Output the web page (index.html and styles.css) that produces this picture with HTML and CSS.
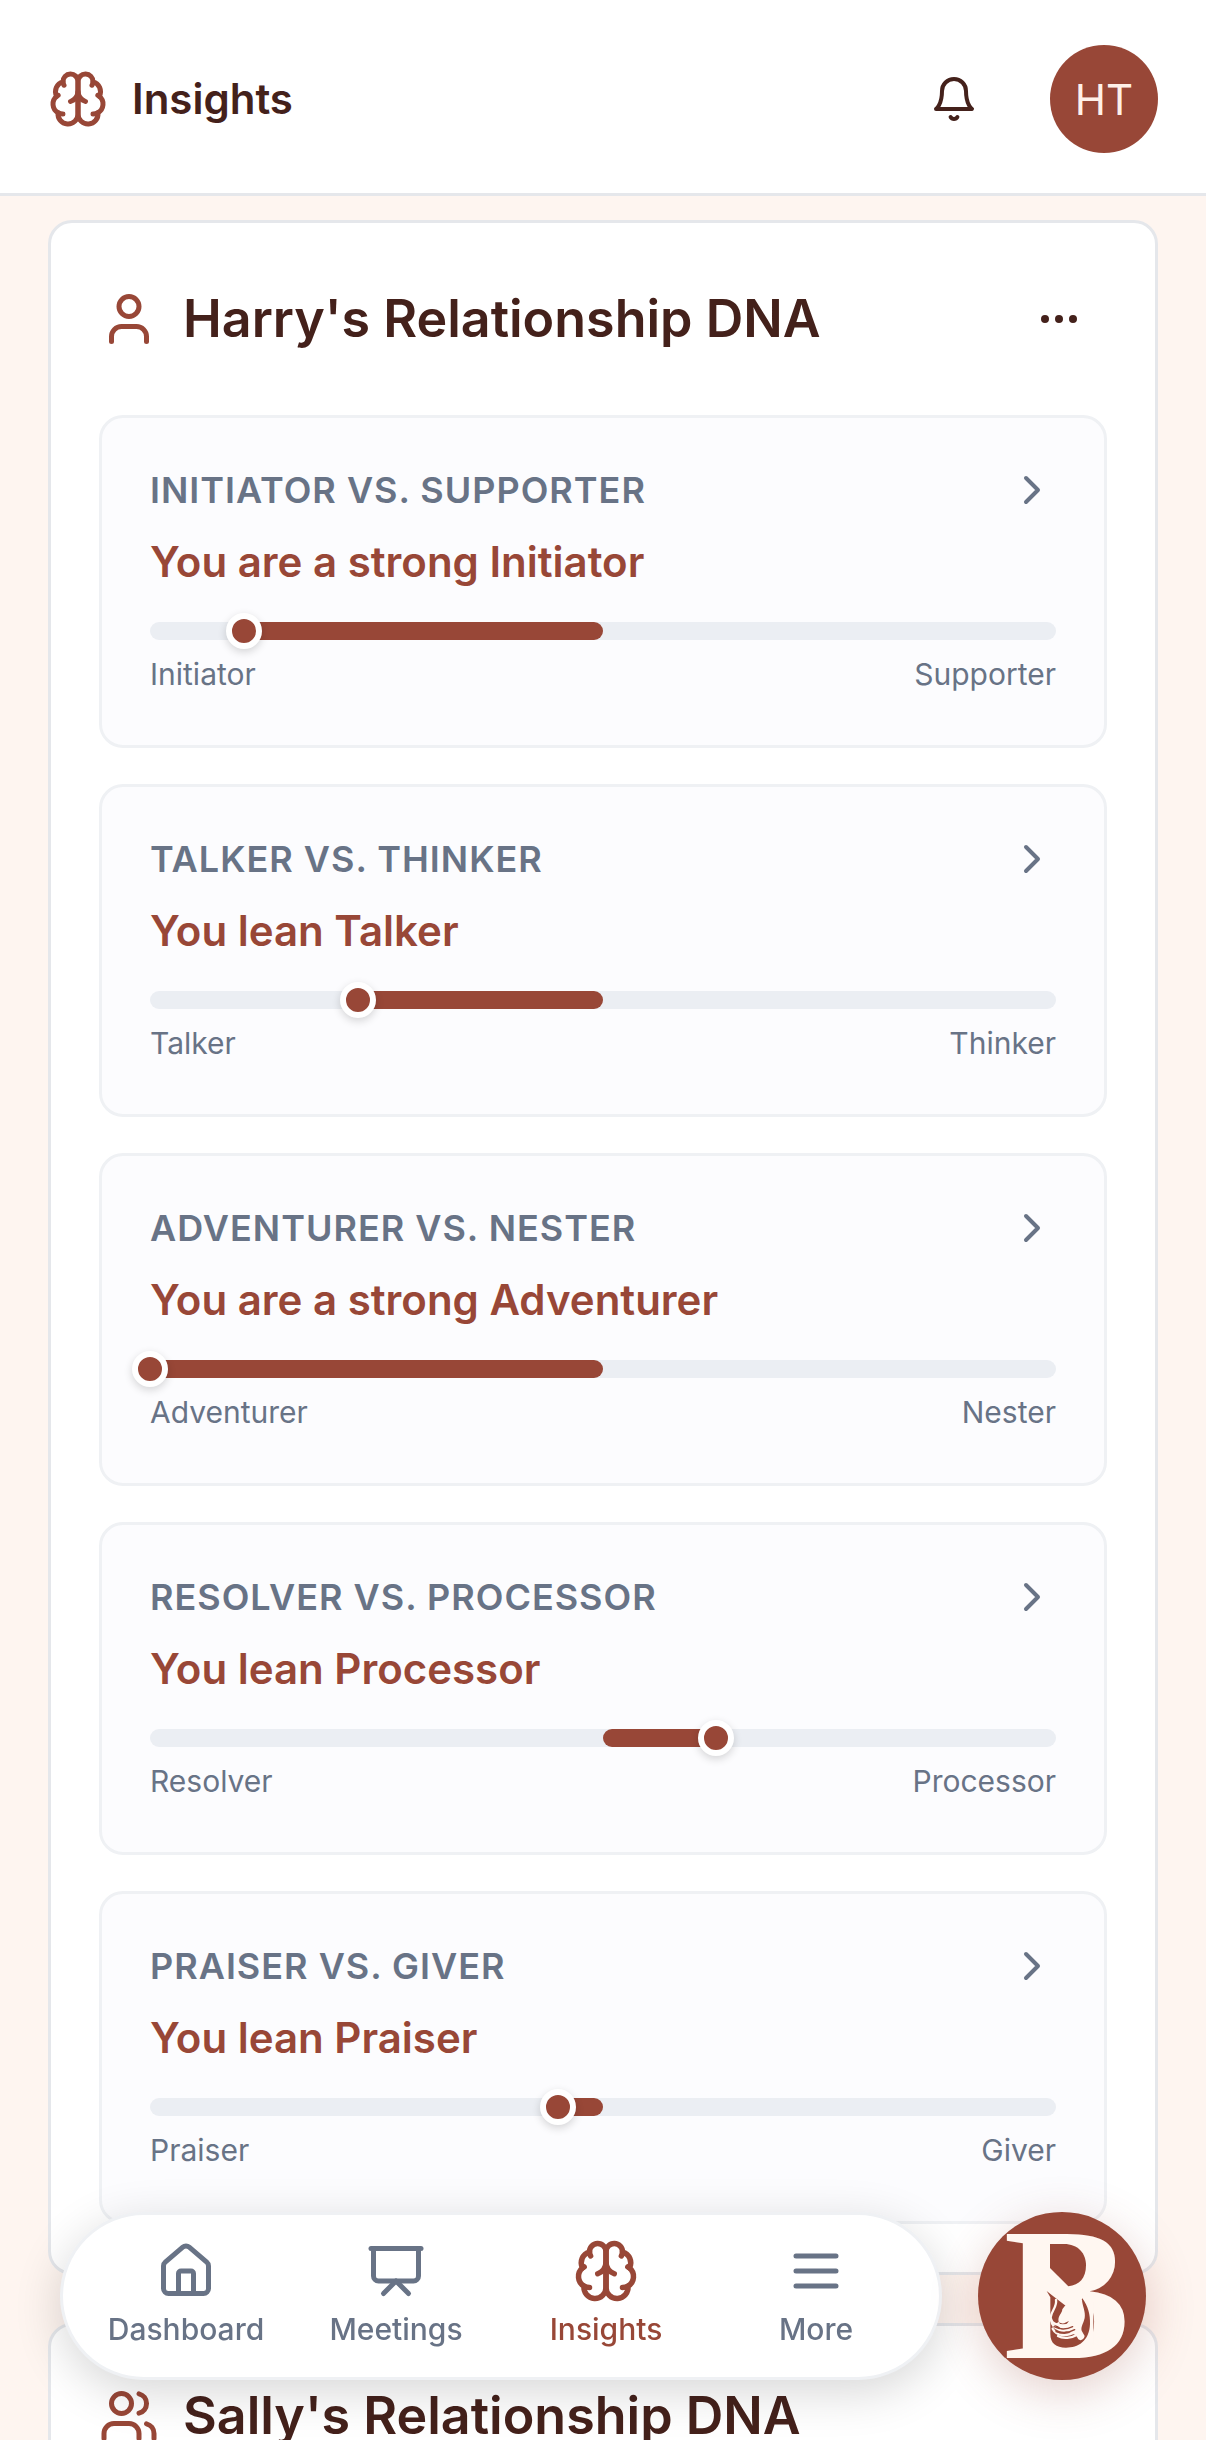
FILE: index.html
```
<!DOCTYPE html>
<html lang="en">
<head>
    <meta charset="UTF-8">
    <meta name="viewport" content="width=device-width, initial-scale=1.0">
    <title>Insights</title>
    <link rel="stylesheet" href="styles.css">
</head>
<body>
    <!-- Shared icons -->
    <svg class="icon-defs" aria-hidden="true">
        <symbol id="icon-brain" viewBox="0 0 24 24">
            <path d="M12 5a3 3 0 1 0-5.997.125 4 4 0 0 0-2.526 5.77 4 4 0 0 0 .556 6.588A4 4 0 1 0 12 18Z"/>
            <path d="M12 5a3 3 0 1 1 5.997.125 4 4 0 0 1 2.526 5.77 4 4 0 0 1-.556 6.588A4 4 0 1 1 12 18Z"/>
            <path d="M15 13a4.5 4.5 0 0 1-3-4 4.5 4.5 0 0 1-3 4"/>
            <path d="M17.599 6.5a3 3 0 0 0 .399-1.375M6.003 5.125A3 3 0 0 0 6.401 6.5"/>
            <path d="M3.477 10.896a4 4 0 0 1 .585-.396M19.938 10.5a4 4 0 0 1 .585.396"/>
            <path d="M6 18a4 4 0 0 1-1.967-.516M19.967 17.484A4 4 0 0 1 18 18"/>
        </symbol>
        <symbol id="icon-chevron" viewBox="0 0 24 24">
            <path d="m9 18 6-6-6-6"/>
        </symbol>
    </svg>

    <!-- Header -->
    <header class="topbar">
        <div class="brand">
            <svg class="icon icon-md accent" aria-hidden="true"><use href="#icon-brain"/></svg>
            <h1>Insights</h1>
        </div>
        <div class="topbar-actions">
            <button class="icon-button" type="button" aria-label="Notifications">
                <svg class="icon icon-sm" viewBox="0 0 24 24">
                    <path d="M6 8a6 6 0 0 1 12 0c0 7 3 9 3 9H3s3-2 3-9"/>
                    <path d="M10.3 21a1.94 1.94 0 0 0 3.4 0"/>
                </svg>
            </button>
            <button class="avatar" type="button">HT</button>
        </div>
    </header>

    <!-- Main Content -->
    <main>
        <section class="card">
            <div class="card-header">
                <svg class="icon icon-md accent" viewBox="0 0 24 24" aria-hidden="true">
                    <path d="M19 21v-2a4 4 0 0 0-4-4H9a4 4 0 0 0-4 4v2"/>
                    <circle cx="12" cy="7" r="4"/>
                </svg>
                <h2>Harry's Relationship DNA</h2>
                <button class="icon-button" type="button" aria-label="Options">
                    <svg class="icon icon-sm" viewBox="0 0 24 24">
                        <circle cx="5" cy="12" r="1"/>
                        <circle cx="12" cy="12" r="1"/>
                        <circle cx="19" cy="12" r="1"/>
                    </svg>
                </button>
            </div>

            <div class="traits">
                <a class="trait" href="#initiator">
                    <div class="trait-top">
                        <h3>Initiator vs. Supporter</h3>
                        <svg class="icon icon-sm" aria-hidden="true"><use href="#icon-chevron"/></svg>
                    </div>
                    <p class="trait-result">You are a strong Initiator</p>
                    <div class="scale">
                        <div class="scale-fill" style="left: 10.4%; right: 50%"></div>
                        <div class="scale-thumb" style="left: 10.4%"></div>
                    </div>
                    <div class="scale-labels"><span>Initiator</span><span>Supporter</span></div>
                </a>

                <a class="trait" href="#talker">
                    <div class="trait-top">
                        <h3>Talker vs. Thinker</h3>
                        <svg class="icon icon-sm" aria-hidden="true"><use href="#icon-chevron"/></svg>
                    </div>
                    <p class="trait-result">You lean Talker</p>
                    <div class="scale">
                        <div class="scale-fill" style="left: 23%; right: 50%"></div>
                        <div class="scale-thumb" style="left: 23%"></div>
                    </div>
                    <div class="scale-labels"><span>Talker</span><span>Thinker</span></div>
                </a>

                <a class="trait" href="#adventurer">
                    <div class="trait-top">
                        <h3>Adventurer vs. Nester</h3>
                        <svg class="icon icon-sm" aria-hidden="true"><use href="#icon-chevron"/></svg>
                    </div>
                    <p class="trait-result">You are a strong Adventurer</p>
                    <div class="scale">
                        <div class="scale-fill" style="left: 0%; right: 50%"></div>
                        <div class="scale-thumb" style="left: 0%"></div>
                    </div>
                    <div class="scale-labels"><span>Adventurer</span><span>Nester</span></div>
                </a>

                <a class="trait" href="#resolver">
                    <div class="trait-top">
                        <h3>Resolver vs. Processor</h3>
                        <svg class="icon icon-sm" aria-hidden="true"><use href="#icon-chevron"/></svg>
                    </div>
                    <p class="trait-result">You lean Processor</p>
                    <div class="scale">
                        <div class="scale-fill" style="left: 50%; right: 37.5%"></div>
                        <div class="scale-thumb" style="left: 62.5%"></div>
                    </div>
                    <div class="scale-labels"><span>Resolver</span><span>Processor</span></div>
                </a>

                <a class="trait" href="#praiser">
                    <div class="trait-top">
                        <h3>Praiser vs. Giver</h3>
                        <svg class="icon icon-sm" aria-hidden="true"><use href="#icon-chevron"/></svg>
                    </div>
                    <p class="trait-result">You lean Praiser</p>
                    <div class="scale">
                        <div class="scale-fill" style="left: 45%; right: 50%"></div>
                        <div class="scale-thumb" style="left: 45%"></div>
                    </div>
                    <div class="scale-labels"><span>Praiser</span><span>Giver</span></div>
                </a>
            </div>
        </section>

        <section class="card">
            <div class="card-header">
                <svg class="icon icon-md accent" viewBox="0 0 24 24" aria-hidden="true">
                    <path d="M16 21v-2a4 4 0 0 0-4-4H6a4 4 0 0 0-4 4v2"/>
                    <circle cx="9" cy="7" r="4"/>
                    <path d="M22 21v-2a4 4 0 0 0-3-3.87M16 3.13a4 4 0 0 1 0 7.75"/>
                </svg>
                <h2>Sally's Relationship DNA</h2>
            </div>
        </section>
    </main>

    <!-- Bottom Navigation -->
    <div class="dock">
        <nav class="tabs">
            <a href="#dashboard">
                <svg class="icon icon-md" viewBox="0 0 24 24" aria-hidden="true">
                    <path d="M15 21v-8a1 1 0 0 0-1-1h-4a1 1 0 0 0-1 1v8"/>
                    <path d="M3 10a2 2 0 0 1 .709-1.528l7-5.999a2 2 0 0 1 2.582 0l7 5.999A2 2 0 0 1 21 10v9a2 2 0 0 1-2 2H5a2 2 0 0 1-2-2z"/>
                </svg>
                <span>Dashboard</span>
            </a>
            <a href="#meetings">
                <svg class="icon icon-md" viewBox="0 0 24 24" aria-hidden="true">
                    <path d="M2 3h20"/>
                    <path d="M21 3v11a2 2 0 0 1-2 2H5a2 2 0 0 1-2-2V3"/>
                    <path d="m7 21 5-5 5 5"/>
                </svg>
                <span>Meetings</span>
            </a>
            <a class="active" href="#insights" aria-current="page">
                <svg class="icon icon-md" aria-hidden="true"><use href="#icon-brain"/></svg>
                <span>Insights</span>
            </a>
            <a href="#more">
                <svg class="icon icon-md" viewBox="0 0 24 24" aria-hidden="true">
                    <path d="M4 6h16M4 12h16M4 18h16"/>
                </svg>
                <span>More</span>
            </a>
        </nav>
        <button class="logo-button" type="button" aria-label="Open assistant">
            <svg viewBox="0 0 504 504">
                <text class="logo-letter" x="77" y="437">B</text>
                <!-- openings of the letter, with the hands inside the lower one -->
                <path class="logo-light" d="M150 80H290L332 120V200L306 240L346 270V400L320 420H150Z"/>
                <path class="logo-dark" d="M216 96H258C300 96 324 124 324 160C324 198 304 220 271 223L216 168Z"/>
                <path class="logo-dark" d="M206 237L222 250L260 279H300L313 259C330 282 337 308 336 336C334 388 300 407 264 407C234 407 217 394 217 366V256Z"/>
                <path class="logo-light" d="M258 270L312 262C312 280 324 300 320 318C316 336 308 344 311 356L320 372C318 382 308 388 301 382L294 370L250 350L232 336L242 330C238 312 252 306 253 292L262 280Z"/>
                <path class="logo-dark" d="M243 330C256 340 262 330 273 327C266 338 256 344 247 340Z"/>
                <path class="logo-finger" d="M234 264C238 284 220 296 218 316C220 342 254 344 282 336"/>
                <path class="logo-finger" d="M219 322C224 358 258 362 290 348"/>
                <path class="logo-finger" d="M224 350C236 374 268 374 296 358"/>
                <path class="logo-finger" d="M240 372C256 382 280 378 298 368"/>
                <path class="logo-crease" d="M228 344C248 354 268 352 284 344M234 359C254 366 274 362 290 353"/>
            </svg>
        </button>
    </div>
</body>
</html>
```
FILE: styles.css
```
* {
    box-sizing: border-box;
}

body {
    margin: 0;
    height: 100vh;
    overflow: hidden;
    display: flex;
    flex-direction: column;
    font-family: Inter, "Liberation Sans", sans-serif;
    color: #44211b;
    background-color: #fef5f0;
}

h1, h2, h3, p {
    margin: 0;
}

a {
    color: inherit;
    text-decoration: none;
}

button {
    padding: 0;
    border: none;
    background: none;
    font-family: inherit;
    color: inherit;
    cursor: pointer;
}

/* Icons */
.icon-defs {
    display: none;
}

.icon {
    flex-shrink: 0;
    fill: none;
    stroke: currentColor;
    stroke-width: 2;
    stroke-linecap: round;
    stroke-linejoin: round;
}

.icon-sm {
    width: 48px;
    height: 48px;
}

.icon-md {
    width: 60px;
    height: 60px;
}

.accent {
    color: #984737;
}

.icon-button {
    display: flex;
    align-items: center;
    justify-content: center;
    width: 96px;
    height: 96px;
}

/* Header */
.topbar {
    flex-shrink: 0;
    display: flex;
    align-items: center;
    justify-content: space-between;
    padding: 45px 48px 40px;
    background-color: #fff;
    border-bottom: 3px solid #e5e7eb;
}

.brand {
    display: flex;
    align-items: center;
    gap: 24px;
}

.brand h1 {
    font-size: 42px;
    font-weight: 600;
    line-height: 60px;
}

.topbar-actions {
    display: flex;
    align-items: center;
    gap: 48px;
}

.avatar {
    width: 108px;
    height: 108px;
    border-radius: 50%;
    background-color: #984737;
    color: #fff0e8;
    font-size: 42px;
}

/* Cards */
main {
    flex: 1;
    min-height: 0;
    overflow: hidden;
    padding: 24px 48px 0;
}

.card {
    margin-bottom: 48px;
    padding: 48px;
    background-color: #fff;
    border: 3px solid #e5e7eb;
    border-radius: 24px;
}

.card-header {
    display: flex;
    align-items: center;
    gap: 24px;
    margin-bottom: 48px;
}

.card-header h2 {
    flex: 1;
    font-size: 52px;
    font-weight: 600;
    line-height: 84px;
}

.traits {
    display: flex;
    flex-direction: column;
    gap: 36px;
}

.trait {
    display: block;
    padding: 48px;
    background-color: #fcfcfe;
    border: 3px solid #eff1f4;
    border-radius: 24px;
    color: #687386;
}

.trait-top {
    display: flex;
    align-items: center;
    justify-content: space-between;
    margin-bottom: 18px;
}

.trait-top h3 {
    font-size: 36px;
    font-weight: 600;
    line-height: 48px;
    letter-spacing: 1px;
    text-transform: uppercase;
}

.trait-result {
    margin-bottom: 30px;
    font-size: 42px;
    font-weight: 600;
    line-height: 60px;
    color: #984737;
}

.scale {
    position: relative;
    height: 18px;
    margin-bottom: 12px;
    border-radius: 9px;
    background-color: #ebeef3;
}

.scale-fill {
    position: absolute;
    top: 0;
    bottom: 0;
    border-radius: 9px;
    background-color: #984737;
}

.scale-thumb {
    position: absolute;
    top: 50%;
    width: 36px;
    height: 36px;
    border: 6px solid #fff;
    border-radius: 50%;
    background-color: #984737;
    box-shadow: 0 3px 9px rgba(0, 0, 0, 0.16);
    transform: translate(-50%, -50%);
}

.scale-labels {
    display: flex;
    justify-content: space-between;
    font-size: 30px;
    line-height: 45px;
}

/* Bottom navigation */
.dock {
    position: fixed;
    left: 60px;
    right: 60px;
    bottom: 60px;
    display: flex;
    gap: 36px;
}

.tabs {
    flex: 1;
    display: grid;
    grid-template-columns: repeat(4, 1fr);
    height: 168px;
    padding: 0 18px;
    border: 3px solid #eff1f4;
    border-radius: 84px;
    background-color: #fff;
    box-shadow: 0 12px 48px rgba(0, 0, 0, 0.16);
}

.tabs a {
    display: flex;
    flex-direction: column;
    align-items: center;
    justify-content: center;
    gap: 6px;
    font-size: 30px;
    font-weight: 500;
    line-height: 45px;
    color: #687386;
}

.tabs .active {
    color: #984737;
}

.tabs .active .icon {
    transform: scale(1.1);
}

.logo-button {
    width: 168px;
    height: 168px;
    border-radius: 50%;
    background-color: #984737;
    box-shadow: 0 12px 48px rgba(152, 71, 55, 0.25);
}

.logo-button svg {
    display: block;
    width: 100%;
    overflow: visible;
}

.logo-letter {
    font-family: "Liberation Serif", serif;
    font-size: 567px;
    font-weight: 700;
    fill: #fff7f1;
}

.logo-light {
    fill: #fff7f1;
}

.logo-dark {
    fill: #984737;
}

.logo-finger {
    fill: none;
    stroke: #fff7f1;
    stroke-width: 7;
    stroke-linecap: round;
}

.logo-crease {
    fill: none;
    stroke: #984737;
    stroke-width: 4;
    stroke-linecap: round;
}
```
